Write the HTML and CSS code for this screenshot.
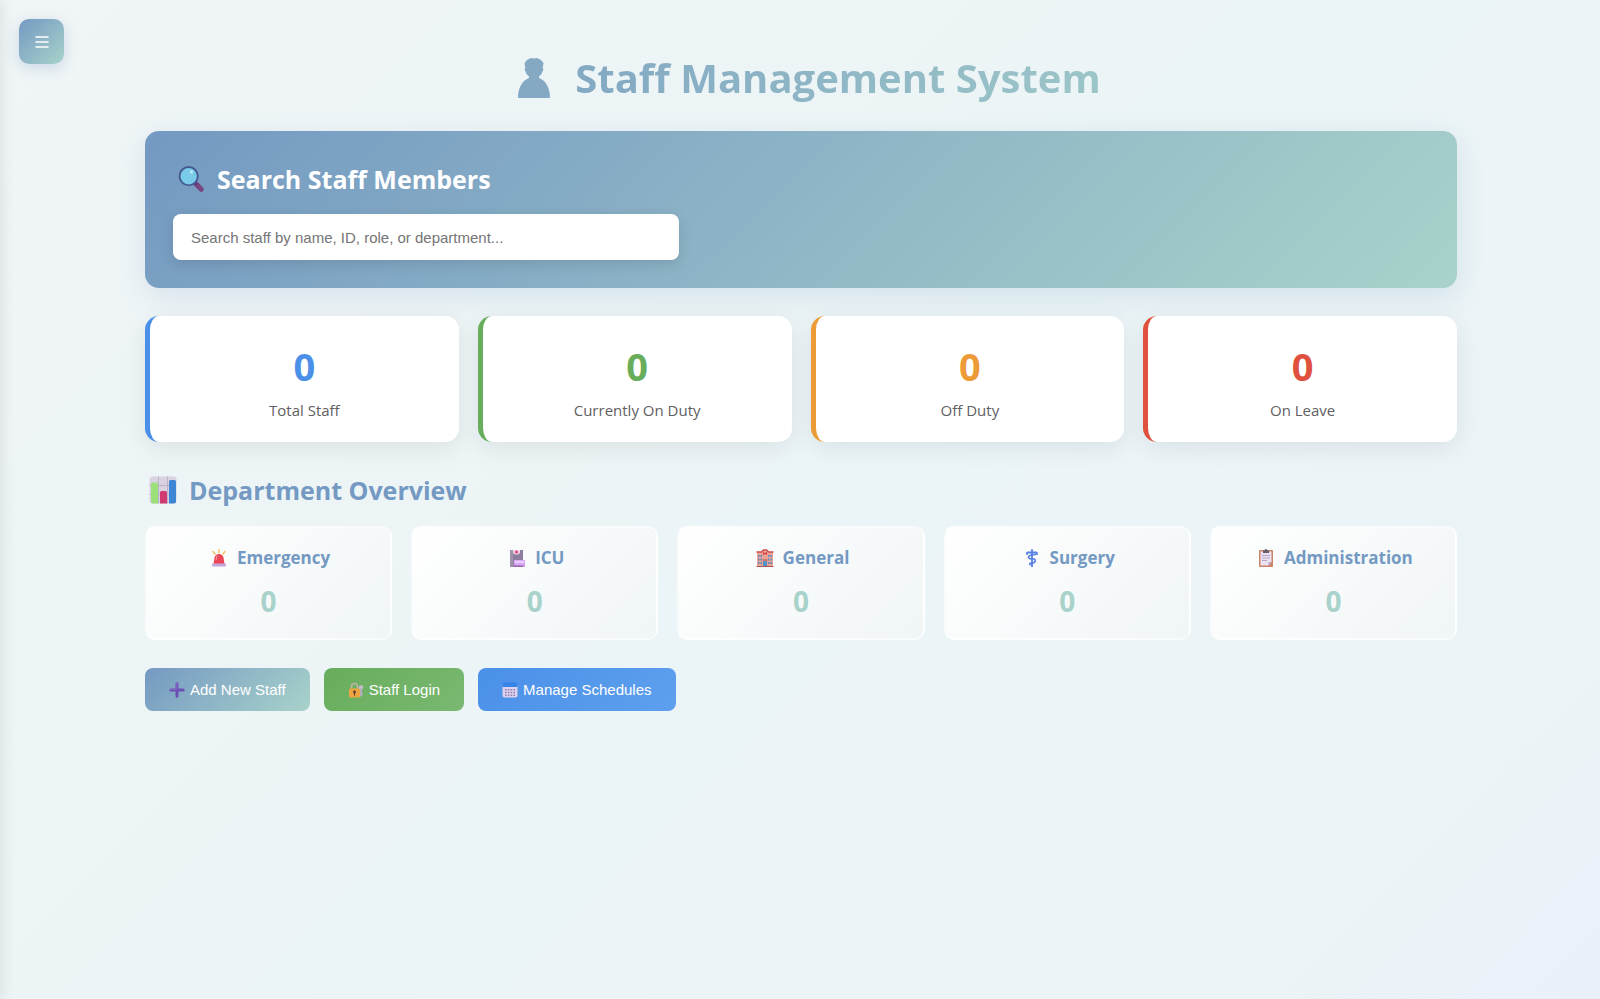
FILE: index.html
```html
<!DOCTYPE html>
<html lang="en">
<head>
  <meta charset="UTF-8" />
  <meta name="viewport" content="width=device-width, initial-scale=1.0" />
  <title>Staff Management System</title>
  <link rel="stylesheet" href="styles.css">
</head>
<body>
  <button class="menu-toggle" type="button" aria-label="Open menu">
    <svg viewBox="0 0 14 14" aria-hidden="true"><path d="M1 2h12M1 7h12M1 12h12" stroke="#fff" stroke-width="1.6" stroke-linecap="round"/></svg>
  </button>

  <main class="container">
    <h1>
      <svg class="title-icon" viewBox="0 0 34 42" aria-hidden="true">
        <path d="M1 41C1 31 5 23.500 12 21V19.500C10 18 9 16.500 8.700 14.500C7.500 14 7.300 12 8.300 11.500L7.500 6L10 3L14 1L17 1.600L20 1L24 3L26.500 6L25.700 11.500C26.700 12 26.500 14 25.300 14.500C25 16.500 24 18 22 19.500V21C29 23.500 33 31 33 41Z" fill="#85a9c2"/>
      </svg>
      <span class="title-text">Staff Management System</span>
    </h1>

    <section class="search-section">
      <h2>
        <svg class="heading-icon" viewBox="0 0 28 30" aria-hidden="true">
          <path d="M19 20l6 6" stroke="#79457f" stroke-width="5.500" stroke-linecap="round"/>
          <path d="M17 18l3 3" stroke="#4d3f78" stroke-width="2.500"/>
          <circle cx="11.500" cy="12" r="9.800" fill="#7acbe9" stroke="#455a92" stroke-width="2"/>
          <circle cx="14.500" cy="7.500" r="1.800" fill="#b8e6f8"/>
        </svg>
        <label for="staff-search">Search Staff Members</label>
      </h2>
      <input type="text" id="staff-search" placeholder="Search staff by name, ID, role, or department..." />
    </section>

    <section class="stats">
      <div class="stat-card total">
        <div class="stat-number">0</div>
        <div class="stat-label">Total Staff</div>
      </div>
      <div class="stat-card on-duty">
        <div class="stat-number">0</div>
        <div class="stat-label">Currently On Duty</div>
      </div>
      <div class="stat-card off-duty">
        <div class="stat-number">0</div>
        <div class="stat-label">Off Duty</div>
      </div>
      <div class="stat-card on-leave">
        <div class="stat-number">0</div>
        <div class="stat-label">On Leave</div>
      </div>
    </section>

    <section class="departments">
      <h2>
        <svg class="heading-icon" viewBox="0 0 28 28" aria-hidden="true">
          <rect x="0.500" y="0.500" width="27" height="27" rx="3" fill="#d9d2e1"/>
          <path d="M.5 9.500h27M.5 18.500h27M9.500 .5v27M18.500 .5v27" stroke="#bdb2ca"/>
          <path d="M2 8a1.500 1.500 0 0 1 1.500-1.500h4A1.500 1.500 0 0 1 9 8v19.500H4A2 2 0 0 1 2 25.500z" fill="#9be078"/>
          <path d="M11 16.500a1.500 1.500 0 0 1 1.500-1.500h4a1.500 1.500 0 0 1 1.500 1.500v11h-7z" fill="#cf3a70"/>
          <path d="M20 5.500a1.500 1.500 0 0 1 1.500-1.500h4A1.500 1.500 0 0 1 27 5.500v20a2 2 0 0 1-2 2h-5z" fill="#3d86d6"/>
        </svg>
        Department Overview
      </h2>
      <div class="department-grid">
        <div class="department-card">
          <h3>
            <svg viewBox="0 0 18 18" aria-hidden="true">
              <path d="M9 .5v3M3 2.500l2 2.500M15 2.500l-2 2.500" stroke="#f3bd4b" stroke-width="1.300" stroke-linecap="round"/>
              <path d="M3.500 15L4.500 8.500Q5.500 5 9 5t4.500 3.500L14.500 15z" fill="#ea4657"/>
              <path d="M7 7l-1 4" stroke="#ff9b94" stroke-linecap="round"/>
              <rect x="2" y="14.500" width="14" height="3" rx="1" fill="#c3a8dc"/>
            </svg>
            Emergency
          </h3>
          <div class="department-count">0</div>
        </div>
        <div class="department-card">
          <h3>
            <svg viewBox="0 0 18 18" aria-hidden="true">
              <path d="M2 1h13v17H2z" fill="#8d7e9d"/>
              <path d="M2 1h3v17H2z" fill="#a193ae"/>
              <path d="M5 1h7v3L10 5.500H7L5 4z" fill="#f3dcea"/>
              <path d="M8.500 1.200v3.600M6.700 3h3.600" stroke="#dc4182" stroke-width="1.300"/>
              <rect x="6" y="11" width="11" height="5.500" fill="#d8a8f5"/>
              <path d="M7 13h9" stroke="#f0dcff" stroke-width="1.500"/>
              <path d="M6 17h11" stroke="#ae4ec4" stroke-dasharray="3 1"/>
            </svg>
            ICU
          </h3>
          <div class="department-count">0</div>
        </div>
        <div class="department-card">
          <h3>
            <svg viewBox="0 0 18 18" aria-hidden="true">
              <path d="M1 3h4l2-2h4l2 2h4v14.500H1z" fill="#eaa394"/>
              <path d="M.5 3h5l2-2h3l2 2h5" fill="none" stroke="#c94d4e" stroke-width="1.400"/>
              <path d="M7.700 3v3M10.300 3v3M7.700 4.500h2.600" stroke="#ce3c48"/>
              <path d="M2 7h4M2 10.500h4M2 14h4M12 7h4M12 10.500h4M12 14h4" stroke="#588dbf" stroke-width="1.800" stroke-dasharray="1.500 1"/>
              <rect x="7" y="12" width="4" height="5.500" fill="#5591c4"/>
              <path d="M6.500 11h5M.5 17.500h17" stroke="#ae5656"/>
            </svg>
            General
          </h3>
          <div class="department-count">0</div>
        </div>
        <div class="department-card">
          <h3>
            <svg viewBox="0 0 18 18" aria-hidden="true">
              <g fill="none" stroke="#547fe2" stroke-linecap="round">
                <path d="M9 1v16.500" stroke-width="1.800"/>
                <path d="M4 5q0-2 2-1.500h6q2-.5 2 1.500" stroke-width="1.900"/>
                <path d="M12.500 5.500Q5.500 6 5.500 8T9 9.800t3.300 2T9 14t-2 1.800" stroke-width="1.600"/>
              </g>
            </svg>
            Surgery
          </h3>
          <div class="department-count">0</div>
        </div>
        <div class="department-card">
          <h3>
            <svg viewBox="0 0 18 18" aria-hidden="true">
              <rect x="2" y="1" width="14" height="17" rx="1" fill="#c98565"/>
              <path d="M3.500 2.500h11V13l-3 3.500h-8z" fill="#e9e0f1"/>
              <path d="M14.500 13l-3 3.500V13z" fill="#bba9cb"/>
              <path d="M5 6.500h8M5 9h8M5 11.500h5" stroke="#b6a8c6"/>
              <path d="M6 1.500h1.500a1.500 1.500 0 0 1 3 0H12V4H6z" fill="#66606c"/>
            </svg>
            Administration
          </h3>
          <div class="department-count">0</div>
        </div>
      </div>
    </section>

    <div class="actions">
      <button class="btn btn-add" type="button">
        <svg viewBox="0 0 16 16" aria-hidden="true"><path d="M8 1.800v12.400M1.800 8h12.400" stroke="#6d50b4" stroke-width="3" stroke-linecap="round"/><path d="M8 1.500V7M2 7.300h5" stroke="#8b6cca" stroke-linecap="round"/></svg>
        Add New Staff
      </button>
      <button class="btn btn-login" type="button">
        <svg viewBox="0 0 16 16" aria-hidden="true">
          <circle cx="13" cy="5.500" r="2.200" fill="#c6bed0"/>
          <path d="M13 6v8.500M13 12h1.800" stroke="#b9aec4" stroke-width="1.800"/>
          <path d="M3.500 7V4.500a3 3 0 0 1 6 0V7" fill="none" stroke="#c3b3a8" stroke-width="1.600"/>
          <rect x="1" y="6.500" width="11" height="9" rx="1.500" fill="#efa53f"/>
          <circle cx="6.500" cy="10" r="1.400" fill="#5a3a37"/>
          <path d="M6.500 10v3.500" stroke="#5a3a37" stroke-width="1.200"/>
        </svg>
        Staff Login
      </button>
      <button class="btn btn-schedule" type="button">
        <svg viewBox="0 0 16 16" aria-hidden="true">
          <rect x="0.500" y="2" width="15" height="13.500" rx="2" fill="#ddd2ee"/>
          <path d="M.5 5V3a2.500 2.500 0 0 1 2.500-2.500h10A2.500 2.500 0 0 1 15.500 3v2z" fill="#3583e8"/>
          <path d="M3 7.800h10M3 10.500h10M3 13.200h10" stroke="#9481b6" stroke-width="1.500" stroke-dasharray="1.600 1.200"/>
        </svg>
        Manage Schedules
      </button>
    </div>
  </main>
</body>
</html>
```
FILE: styles.css
```css
:root {
  --primary: #7499c2;
  --secondary: #a8d2ca;
  --blue: #4a90e8;
  --green: #67ad5b;
  --orange: #ed9b37;
  --red: #df503d;
  --text: #5f6062;
}

* {
  box-sizing: border-box;
  margin: 0;
  padding: 0;
}

body {
  font-family: 'Segoe UI', 'Open Sans', sans-serif;
  background: linear-gradient(135deg, #f0f5f6 0%, #ebf4f6 50%, #ebf3f6 88%, #eaf0fa 100%);
  color: var(--text);
  min-height: 100vh;
  padding: 46px 24px 46px 26px;
}

/* shadow of the closed side menu */
body::before {
  content: '';
  position: fixed;
  top: 0;
  bottom: 0;
  left: -10px;
  width: 10px;
  box-shadow: 2px 0 14px rgba(0, 0, 0, 0.1);
}

.menu-toggle {
  position: fixed;
  top: 19px;
  left: 19px;
  width: 45px;
  height: 45px;
  display: flex;
  align-items: center;
  justify-content: center;
  border: none;
  border-radius: 10px;
  background: linear-gradient(135deg, var(--primary), var(--secondary));
  box-shadow: 0 4px 14px rgba(116, 153, 194, 0.3);
  cursor: pointer;
}

.menu-toggle svg {
  width: 14px;
  height: 14px;
}

.container {
  max-width: 1312px;
  margin: 0 auto;
}

h1 {
  display: flex;
  align-items: center;
  justify-content: center;
  gap: 24px;
  padding-left: 16px;
  font-size: 40px;
  line-height: 64px;
  font-weight: 700;
  margin-bottom: 21px;
}

.title-icon {
  width: 34px;
  height: 42px;
}

.title-text {
  background: linear-gradient(90deg, #83a9c3, #9cc5c8);
  -webkit-background-clip: text;
  background-clip: text;
  color: transparent;
}

h2 {
  display: flex;
  align-items: center;
  gap: 12px;
  padding-left: 4px;
  font-size: 25px;
  line-height: 40px;
  font-weight: 700;
  color: var(--primary);
}

.heading-icon {
  width: 28px;
  height: 28px;
}

.search-section {
  padding: 28px;
  border-radius: 14px;
  background: linear-gradient(135deg, var(--primary), var(--secondary));
  box-shadow: 0 8px 28px rgba(116, 153, 194, 0.2);
  margin-bottom: 28px;
}

.search-section h2 {
  color: #fff;
  margin-bottom: 15px;
}

#staff-search {
  display: block;
  width: 100%;
  max-width: 506px;
  height: 46px;
  padding: 0 18px;
  border: none;
  border-radius: 8px;
  background: #fff;
  font-family: 'Liberation Sans', Arial, sans-serif;
  font-size: 15px;
  box-shadow: 0 4px 14px rgba(0, 0, 0, 0.12);
}

#staff-search::placeholder {
  color: #757575;
}

.stats {
  display: grid;
  grid-template-columns: repeat(4, 1fr);
  gap: 19px;
  margin-bottom: 28px;
}

.stat-card {
  padding: 24px 24px 21px;
  text-align: center;
  background: #fff;
  border-left: 5px solid var(--blue);
  border-radius: 14px;
  box-shadow: 0 6px 24px rgba(0, 0, 0, 0.08);
}

.stat-number {
  color: var(--blue);
  font-size: 38px;
  line-height: 52px;
  font-weight: 700;
  margin-bottom: 7px;
}

.stat-label {
  font-size: 15px;
  line-height: 22px;
  font-weight: 500;
}

.on-duty { border-left-color: var(--green); }
.on-duty .stat-number { color: var(--green); }
.off-duty { border-left-color: var(--orange); }
.off-duty .stat-number { color: var(--orange); }
.on-leave { border-left-color: var(--red); }
.on-leave .stat-number { color: var(--red); }

.departments {
  margin-bottom: 28px;
}

.departments h2 {
  margin-bottom: 16px;
}

.department-grid {
  display: grid;
  grid-template-columns: repeat(5, 1fr);
  gap: 19px;
}

.department-card {
  padding: 16px;
  text-align: center;
  background: linear-gradient(135deg, #fff, #f0f5f6);
  border: 2px solid rgba(255, 255, 255, 0.5);
  border-radius: 10px;
}

.department-card h3 {
  display: flex;
  align-items: center;
  justify-content: center;
  gap: 9px;
  padding-left: 3px;
  font-size: 17px;
  line-height: 28px;
  font-weight: 700;
  color: var(--primary);
  margin-bottom: 8px;
}

.department-card svg {
  width: 18px;
  height: 18px;
}

.department-count {
  color: var(--secondary);
  font-size: 28px;
  line-height: 42px;
  font-weight: 700;
}

.actions {
  display: flex;
  flex-wrap: wrap;
  gap: 14px;
}

.btn {
  display: flex;
  align-items: center;
  gap: 5px;
  height: 43px;
  padding: 0 24px;
  border: none;
  border-radius: 8px;
  color: #fff;
  font-family: 'Liberation Sans', Arial, sans-serif;
  font-size: 15px;
  cursor: pointer;
}

.btn svg {
  width: 16px;
  height: 16px;
}

.btn-add { background: linear-gradient(135deg, var(--primary), var(--secondary)); }
.btn-login { background: linear-gradient(135deg, #67ad5b, #7ab871); }
.btn-schedule { background: linear-gradient(135deg, #4a90e8, #5ea0ee); }
```
